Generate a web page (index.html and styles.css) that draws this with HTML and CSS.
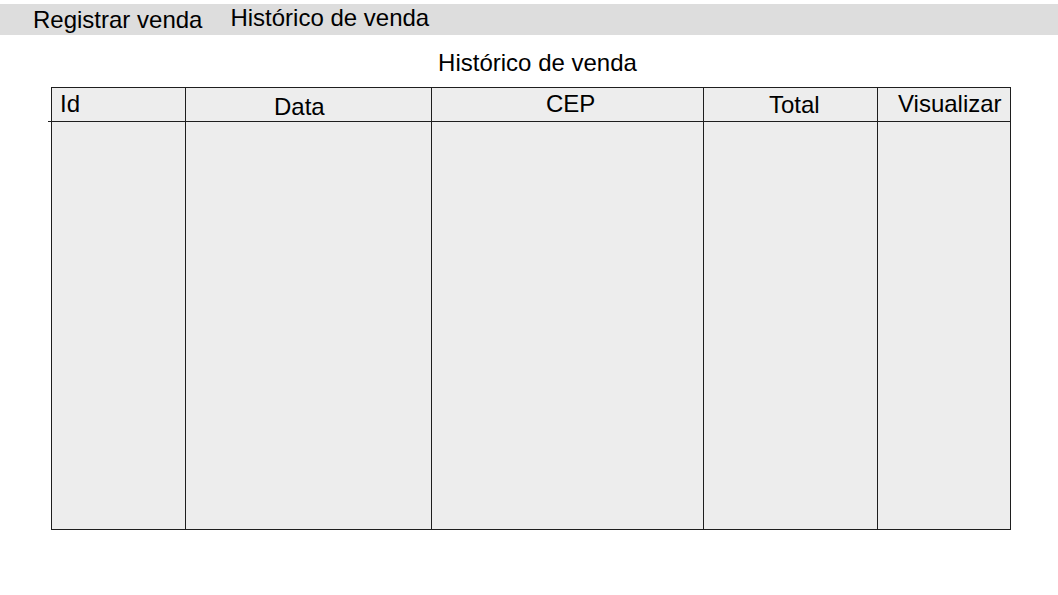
FILE: index.html
```html
<!DOCTYPE html>
<html lang="pt">
<head>
<meta charset="utf-8">
<title>Histórico de venda</title>
<link rel="stylesheet" href="styles.css">
</head>
<body>
<nav class="menu">
  <span class="menu-item menu-item--register">Registrar venda</span>
  <span class="menu-item menu-item--history">Histórico de venda</span>
</nav>
<h1 class="page-title">Histórico de venda</h1>
<div class="sales-table">
  <div class="cell head head-id">Id</div>
  <div class="cell head head-date">Data</div>
  <div class="cell head head-cep">CEP</div>
  <div class="cell head head-total">Total</div>
  <div class="cell head head-view">Visualizar</div>
  <div class="cell body-cell"></div>
  <div class="cell body-cell"></div>
  <div class="cell body-cell"></div>
  <div class="cell body-cell"></div>
  <div class="cell body-cell"></div>
</div>
</body>
</html>
```
FILE: styles.css
```css
* { box-sizing: border-box; }
html, body {
  margin: 0;
  padding: 0;
  background: #ffffff;
  font-family: "Liberation Sans", Arial, sans-serif;
  color: #000;
}
body { padding-top: 4px; }
.menu {
  display: flex;
  height: 31px;
  background: #dddddd;
  padding-left: 33px;
}
.menu-item {
  font-size: 24px;
  line-height: 24px;
  white-space: nowrap;
}
.menu-item--register { padding-top: 4px; }
.menu-item--history { padding-top: 2px; margin-left: 28px; }
.page-title {
  margin: 0;
  padding-top: 16px;
  padding-left: 17px;
  text-align: center;
  font-weight: normal;
  font-size: 24px;
  line-height: 24px;
}
.sales-table {
  margin: 12px 0 0 51px;
  width: 960px;
  display: grid;
  grid-template-columns: 134px 246px 272px 174px 132px;
  grid-template-rows: 34px 407px;
  border: 1px solid #1e1e1e;
  background: #ededed;
}
.cell {
  border-right: 1px solid #1e1e1e;
}
.cell:nth-child(5n) { border-right: none; }
.head {
  border-bottom: 1px solid #1e1e1e;
  font-size: 24px;
  line-height: 24px;
  white-space: nowrap;
}
.head-id { padding: 4px 0 0 8px; position: relative; }
.head-id::before {
  content: "";
  position: absolute;
  left: -4px;
  bottom: -1px;
  width: 3px;
  height: 1px;
  background: #1e1e1e;
}
.head-date { padding: 7px 0 0 88px; }
.head-cep { padding: 4px 0 0 114px; }
.head-total { padding: 5px 0 0 65px; }
.head-view { padding: 4px 0 0 20px; }
```
